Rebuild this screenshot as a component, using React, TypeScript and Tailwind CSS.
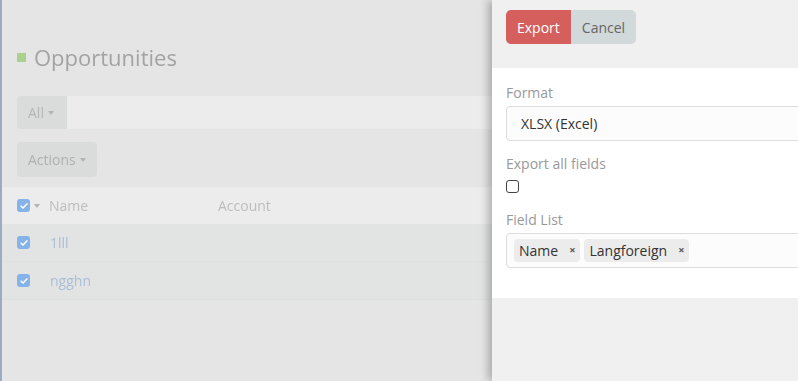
import React from "react";

const font = { fontFamily: '"Open Sans", "Noto Sans", sans-serif' };

function Check() {
  return (
    <span className="flex h-[13px] w-[13px] items-center justify-center rounded-[3px] bg-[#86b2ea]">
      <svg viewBox="0 0 12 12" className="h-[10px] w-[10px]">
        <path d="M2.5 6.2l2.3 2.3 4.7-5" fill="none" stroke="#fff" strokeWidth="1.8" strokeLinecap="round" strokeLinejoin="round" />
      </svg>
    </span>
  );
}

function Caret() {
  return <span className="ml-1 inline-block h-0 w-0 border-x-[3.5px] border-t-[4px] border-x-transparent border-t-[#b4b4b4]" />;
}

function ListPage() {
  return (
    <div className="flex h-full flex-col border-l-[2px] border-[#9ea9c2] bg-[#e5e5e5] blur-[0.6px]">
      <div className="flex items-center gap-2 px-[15px] pt-[44px]">
        <span className="h-[9px] w-[9px] bg-[#a9d08e]" />
        <span className="text-[22px] leading-[26px] text-[#a3a3a3]">Opportunities</span>
      </div>
      <div className="ml-[15px] mt-[26px] flex h-[33px]">
        <div className="flex w-[50px] items-center rounded-l-[4px] bg-[#dadcdc] pl-[11px] text-[14px] text-[#b5b5b5]">
          All
          <Caret />
        </div>
        <div className="flex-1 bg-[#ececec]" />
      </div>
      <div className="mx-[15px] mt-[13px] flex h-[35px] w-[80px] items-center rounded-[4px] bg-[#dadcdc] pl-[11px] text-[14px] text-[#b0b0b0]">
        Actions
        <Caret />
      </div>
      <div className="mt-[10px] flex h-[37px] items-center bg-[#ececec] pl-[15px] text-[14px] text-[#bdbdbd]">
        <Check />
        <Caret />
        <span className="ml-[9px] w-[169px]">Name</span>
        <span>Account</span>
      </div>
      {["1lll", "ngghn"].map((n) => (
        <div key={n} className="flex h-[38px] items-center border-b border-[#dfe1e0] bg-[#e2e4e3] pl-[15px] text-[14px] text-[#aabdd7]">
          <Check />
          <span className="ml-[20px]">{n}</span>
        </div>
      ))}
      <div className="flex-1" />
    </div>
  );
}

function Tag({ label }: { label: string }) {
  return (
    <span className="flex h-[23px] items-center rounded-[4px] bg-[#ececec] pl-[5px] pr-[5px] text-[14px] text-[#333]">
      {label}
      <span className="ml-[11px] text-[11px] font-bold text-[#555]">×</span>
    </span>
  );
}

function ExportPanel() {
  return (
    <div className="relative z-10 flex h-full w-[340px] shrink-0 flex-col bg-[#f0f0f0] shadow-[-4px_0_8px_rgba(0,0,0,0.25)]">
      <div className="flex h-[68px] items-start px-[14px] pt-[10px]">
        <button className="h-[34px] rounded-l-[5px] bg-[#d45f5d] px-[11px] text-[14px] text-white">Export</button>
        <button className="h-[34px] rounded-r-[5px] bg-[#d1d9da] px-[11px] text-[14px] text-[#666]">Cancel</button>
      </div>
      <div className="flex flex-col bg-white pb-[30px] pl-[14px] pt-[15px] text-[14px]">
        <div className="leading-[20px] text-[#999]">Format</div>
        <div className="mt-[3px] flex h-[35px] items-center rounded-l-[4px] border border-[#ddd] bg-[#fcfcfc] pl-[14px] text-[#333]">
          XLSX (Excel)
        </div>
        <div className="mt-[13px] leading-[20px] text-[#999]">Export all fields</div>
        <div className="mt-[6px] h-[13px] w-[13px] rounded-[3px] border border-[#444] bg-white" />
        <div className="mt-[17px] leading-[20px] text-[#999]">Field List</div>
        <div className="mt-[3px] flex h-[35px] items-center gap-[4px] rounded-l-[4px] border border-[#ddd] bg-[#fcfcfc] pl-[7px]">
          <Tag label="Name" />
          <Tag label="Langforeign" />
        </div>
      </div>
      <div className="flex-1 bg-[#f0f0f0]" />
    </div>
  );
}

export default function App() {
  return (
    <div className="flex h-[381px] w-[798px] overflow-hidden" style={font}>
      <div className="h-full w-[492px] shrink-0">
        <ListPage />
      </div>
      <ExportPanel />
    </div>
  );
}
